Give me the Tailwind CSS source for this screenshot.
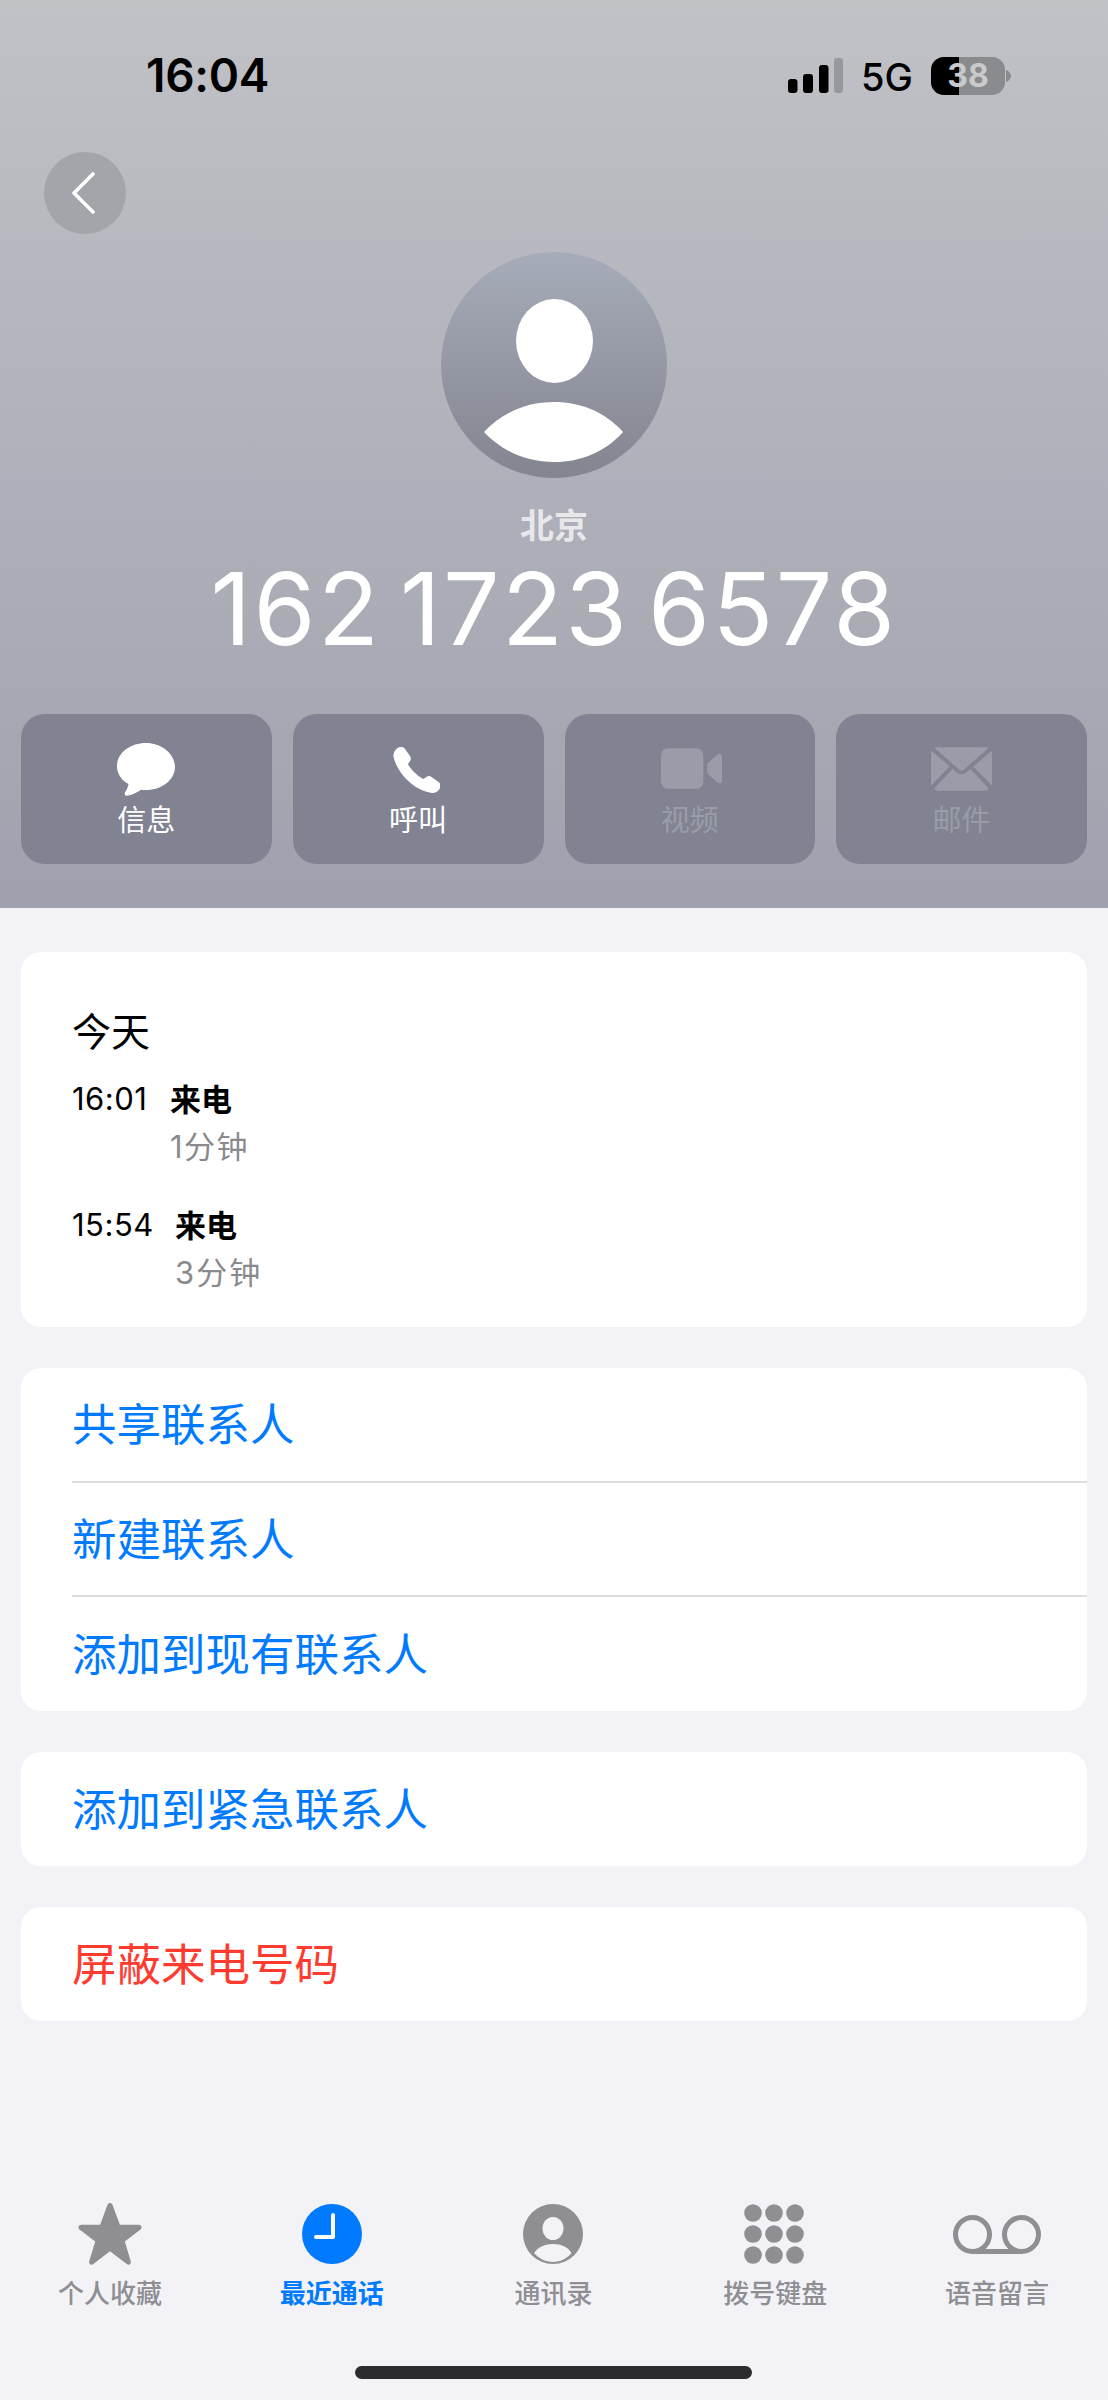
<!DOCTYPE html>
<html lang="zh">
<head>
<meta charset="utf-8">
<script src="https://cdn.jsdelivr.net/npm/@tailwindcss/browser@4"></script>
</head>
<body class="m-0 bg-[#f2f2f7]">
<div class="w-[1108px] h-[2400px] overflow-hidden bg-[#f2f2f7] flex flex-col font-['Inter','Noto_Sans_CJK_SC',sans-serif]">

  <header class="h-[908px] shrink-0 bg-gradient-to-b from-[#c1c2c6] to-[#9fa1ae] flex flex-col">
    <!-- status bar -->
    <div class="h-[152px] shrink-0 pt-[46px] pl-[146px] pr-[97px] flex items-start justify-between">
      <span class="text-[46px] leading-[58px] font-semibold text-black tracking-[-0.3px]">16:04</span>
      <div class="flex items-center gap-[18px] mt-[8px]">
        <svg width="55" height="35" viewBox="0 0 55 35"><rect x="0" y="21" width="9.500" height="14" rx="3" fill="#000"/><rect x="15" y="16" width="10" height="19" rx="3" fill="#000"/><rect x="31" y="7" width="9.500" height="28" rx="3" fill="#000"/><rect x="46" y="0" width="9" height="35" rx="3" fill="#97989d"/></svg>
        <span class="text-[38px] leading-[40px] text-black font-medium mt-[3px]">5G</span>
        <div class="relative w-[74px] h-[38px] rounded-[13px] overflow-hidden bg-[#8a8b8e] flex items-center justify-center">
          <div class="absolute left-0 top-0 bottom-0 w-[28px] bg-black"></div>
          <span class="relative text-[32px] leading-[38px] font-bold text-[#c9cacd]">38</span>
        </div>
        <svg class="ml-[-17px]" width="5" height="12" viewBox="0 0 5 12"><path d="M0 0c3 1 5 3.500 5 6s-2 5-5 6z" fill="#8a8b8e"/></svg>
      </div>
    </div>

    <!-- back -->
    <div class="pl-[44px]">
      <div class="w-[82px] h-[82px] rounded-full bg-[#a4a5aa] flex items-center justify-center pr-[5px]">
        <svg width="24" height="42" viewBox="0 0 24 42" fill="none"><path d="M22 2 3 21l19 19" stroke="#fff" stroke-width="3.600" stroke-linecap="round" stroke-linejoin="round"/></svg>
      </div>
    </div>

    <!-- avatar -->
    <div class="flex justify-center mt-[18px]">
      <div class="w-[226px] h-[226px] rounded-full bg-gradient-to-b from-[#a7acba] to-[#83858f] overflow-hidden">
        <svg width="226" height="226" viewBox="0 0 226 226"><ellipse cx="113.500" cy="89" rx="38.500" ry="42" fill="#fff"/><path d="M43 180C62 160 86 150 113 150s51 10 69 30c-18 20-42 30-69 30s-51-10-70-30z" fill="#fff"/></svg>
      </div>
    </div>

    <div class="text-center text-[#e8e8ea] text-[34px] leading-[44px] font-semibold mt-[26px]">北京</div>
    <div class="text-center text-white text-[100px] leading-[112px] font-normal tracking-[2.4px] [word-spacing:-12px] mt-[5px]">162 1723 6578</div>

    <!-- action buttons -->
    <div class="grid grid-cols-4 gap-[21px] px-[21px] mt-[49px]">
      <div class="h-[150px] rounded-[24px] bg-[#818392] flex flex-col items-center text-white">
        <svg class="mt-[29px]" width="58" height="53" viewBox="0 0 58 53"><path d="M29 0C13 0 0 10 0 23c0 8 4.500 14 11.500 18-.5 3-2 6-3.500 8.500-1 1.700.3 3.500 2 3.200 5-.8 10-3 14-6 1.700.3 3.300.3 5 .3 16 0 29-10.300 29-23S45 0 29 0z" fill="#fff"/></svg>
        <span class="text-[29px] leading-[36px] mt-[7px]">信息</span>
      </div>
      <div class="h-[150px] rounded-[24px] bg-[#818392] flex flex-col items-center text-white">
        <svg class="mt-[33px] ml-[-3px]" width="47" height="46" viewBox="0 0 48 48"><path d="M3 2C6-.5 10-.5 12 2l5 7c1.500 2 1.500 4 0 6l-2 3c2.500 4 5 7 8 9.500 2.500 2.500 5 4.500 8 6l3-2c2-1.500 4-1.500 6 0l7 5c2.500 2 2.500 5 .5 8-2.500 3-6 4-10 3C27 45 18 39 11 31 5 24 1 16 0 10-.5 7 1 4 3 2z" fill="#fff"/></svg>
        <span class="text-[29px] leading-[36px] mt-[10px]">呼叫</span>
      </div>
      <div class="h-[150px] rounded-[24px] bg-[#818392] flex flex-col items-center text-[#9a9ca9]">
        <svg class="mt-[34px] ml-[3px]" width="61" height="41" viewBox="0 0 62 41"><rect x="0" y="0" width="43" height="41" rx="7" fill="#9a9ca9"/><path d="M47 17c0-1 .4-2 1.300-2.700l9-8C59.500 4.500 62 5.500 62 8v25c0 2.500-2.500 3.500-4.700 1.700l-9-8C47.400 26 47 25 47 24z" fill="#9a9ca9"/></svg>
        <span class="text-[29px] leading-[36px] mt-[14px]">视频</span>
      </div>
      <div class="h-[150px] rounded-[24px] bg-[#818392] flex flex-col items-center text-[#9a9ca9]">
        <svg class="mt-[33px]" width="61" height="44" viewBox="0 0 62 44"><path d="M5 0h52c1 0 1.500 .5 1 1L33 23c-1 1-3 1-4 0L4 1c-.5-.5 0-1 1-1z" fill="#9a9ca9"/><path d="M0 5c0-1 .7-1.300 1.300-.7L19 19.500 .8 38c-.4.500-.8.200-.8-.5zM62 5c0-1-.7-1.300-1.300-.7L43 19.500 61.200 38c.4.500.8.200.8-.5z" fill="#9a9ca9"/><path d="M22 22l5 4c2 1.500 6 1.500 8 0l5-4 18 19c.5.700 0 3-2 3H6c-2 0-2.500-2.300-2-3z" fill="#9a9ca9"/></svg>
        <span class="text-[29px] leading-[36px] mt-[12px]">邮件</span>
      </div>
    </div>
  </header>

  <!-- content -->
  <main class="flex flex-col gap-[41px] px-[21px] pt-[44px]">
    <section class="h-[375px] rounded-[20px] bg-white pl-[51px] pt-[57px] text-black">
      <div class="text-[39px] leading-[46px]">今天</div>
      <div class="flex items-start mt-[24px]">
        <span class="text-[31px] leading-[40px] tracking-[0.5px] w-[98px]">16:01</span>
        <div class="mt-[1px]">
          <div class="text-[31px] leading-[40px] font-semibold">来电</div>
          <div class="text-[31px] leading-[40px] tracking-[1.5px] text-[#8a8a8e] mt-[7px]">1分钟</div>
        </div>
      </div>
      <div class="flex items-start mt-[38px]">
        <span class="text-[31px] leading-[40px] tracking-[0.5px] w-[103px]">15:54</span>
        <div class="mt-[1px]">
          <div class="text-[31px] leading-[40px] font-semibold">来电</div>
          <div class="text-[31px] leading-[40px] tracking-[2px] text-[#8a8a8e] mt-[7px]">3分钟</div>
        </div>
      </div>
    </section>

    <section class="rounded-[20px] bg-white text-[#007aff] text-[44.500px]">
      <div class="h-[115px] ml-[51px] pt-[2px] flex items-center border-b-2 border-[#dedee2]">共享联系人</div>
      <div class="h-[114px] ml-[51px] pt-[2px] flex items-center border-b-2 border-[#dedee2]">新建联系人</div>
      <div class="h-[114px] ml-[51px] pt-[3px] flex items-center">添加到现有联系人</div>
    </section>

    <section class="h-[114px] rounded-[20px] bg-white pl-[51px] pt-[3px] flex items-center text-[#007aff] text-[44.500px]">添加到紧急联系人</section>

    <section class="h-[114px] rounded-[20px] bg-white pl-[51px] pt-[2px] flex items-center text-[#ff3b30] text-[44.500px]">屏蔽来电号码</section>
  </main>

  <!-- tab bar + home indicator -->
  <footer class="mt-auto h-[210px] shrink-0 pt-[10px] flex flex-col">
    <nav class="grid grid-cols-5 ml-[-1px] text-[26px] leading-[34px] font-medium text-[#8e8e93]">
      <div class="flex flex-col items-center">
        <div class="h-[68px] flex items-center"><svg width="66" height="63" viewBox="0 0 66 64"><path d="M33 0c1.500 0 2.300 1 3 3l7 19h19c3 0 4 3 2 5L48 39l6 20c1 3-2 5-4 3L33 49 16 62c-2 2-5 0-4-3l6-20L2 27c-2-2-1-5 2-5h19l7-19c.7-2 1.500-3 3-3z" fill="#8e8e93"/></svg></div>
        <span class="mt-[9px]">个人收藏</span>
      </div>
      <div class="flex flex-col items-center text-[#007aff] font-semibold">
        <div class="h-[68px] flex items-center"><svg width="60" height="60" viewBox="0 0 60 60"><circle cx="30" cy="30" r="30" fill="#007aff"/><path d="M31 11v22H14" fill="none" stroke="#fff" stroke-width="4" stroke-linecap="round" stroke-linejoin="round"/></svg></div>
        <span class="mt-[9px]">最近通话</span>
      </div>
      <div class="flex flex-col items-center">
        <div class="h-[68px] flex items-center"><svg width="60" height="60" viewBox="0 0 60 60"><circle cx="30" cy="30" r="30" fill="#8e8e93"/><ellipse cx="30" cy="24.500" rx="10.500" ry="11.500" fill="#f2f2f7"/><path d="M11 49c4-6 11-9 19-9s15 3 18.500 9c-4 5-11 9-18.500 9s-15-4-19-9z" fill="#f2f2f7"/></svg></div>
        <span class="mt-[9px]">通讯录</span>
      </div>
      <div class="flex flex-col items-center">
        <div class="h-[68px] flex items-center ml-[-2px]"><svg width="60" height="60" viewBox="0 0 60 60" fill="#8e8e93"><circle cx="9" cy="9" r="8.800"/><circle cx="30" cy="9" r="8.800"/><circle cx="51" cy="9" r="8.800"/><circle cx="9" cy="30" r="8.800"/><circle cx="30" cy="30" r="8.800"/><circle cx="51" cy="30" r="8.800"/><circle cx="9" cy="51" r="8.800"/><circle cx="30" cy="51" r="8.800"/><circle cx="51" cy="51" r="8.800"/></svg></div>
        <span class="mt-[9px]">拨号键盘</span>
      </div>
      <div class="flex flex-col items-center">
        <div class="h-[68px] flex items-center"><svg width="88" height="39" viewBox="0 0 88 39" fill="none" stroke="#8e8e93" stroke-width="5"><circle cx="19.500" cy="19.500" r="17"/><circle cx="68.500" cy="19.500" r="17"/><path d="M19.500 36.500h49"/></svg></div>
        <span class="mt-[9px]">语音留言</span>
      </div>
    </nav>
    <div class="mt-auto mb-[21px] ml-[355px] w-[397px] h-[13px] rounded-full bg-[#2c2c2e]"></div>
  </footer>
</div>
</body>
</html>
